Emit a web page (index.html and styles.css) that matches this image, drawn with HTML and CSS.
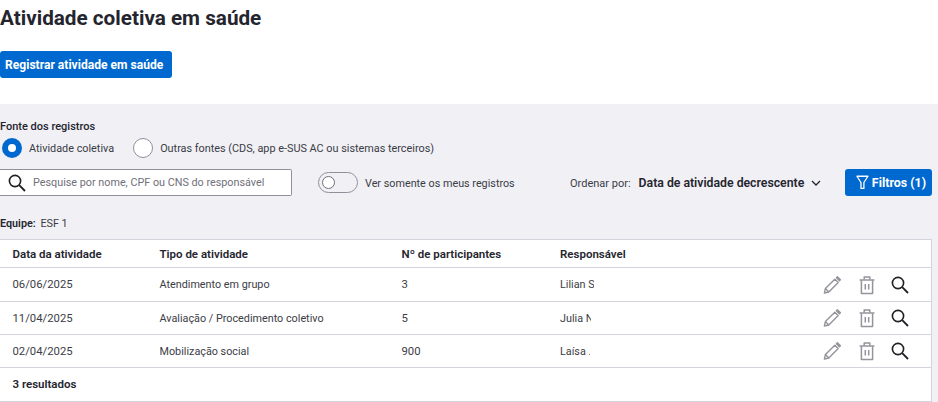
FILE: index.html
```html
<!DOCTYPE html>
<html lang="pt-BR">
<head>
<meta charset="utf-8">
<title>Atividade coletiva em saúde</title>
<link rel="stylesheet" href="styles.css">
</head>
<body>
<header class="head">
  <h1 class="title">Atividade coletiva em saúde</h1>
  <button class="btn btn-register">Registrar atividade em saúde</button>
</header>
<main class="panel">
  <div class="label-strong">Fonte dos registros</div>
  <div class="radios">
    <label class="radio"><span class="radio-dot on"></span>Atividade coletiva</label>
    <label class="radio"><span class="radio-dot"></span>Outras fontes (CDS, app e-SUS AC ou sistemas terceiros)</label>
  </div>
  <div class="toolbar">
    <div class="search">
      <svg class="search-icon" viewBox="0 0 20 20" width="20" height="20"><circle cx="8" cy="8" r="5.6" fill="none" stroke="#1f1f24" stroke-width="1.6"/><path d="M12.2 12.2 18 18" stroke="#1f1f24" stroke-width="1.8" fill="none"/></svg>
      <span class="placeholder">Pesquise por nome, CPF ou CNS do responsável</span>
    </div>
    <div class="switch-wrap">
      <span class="switch"><span class="knob"></span></span>
      <span class="nudge">Ver somente os meus registros</span>
    </div>
    <div class="sort">
      <span class="nudge">Ordenar por:</span>
      <strong class="sort-value nudge">Data de atividade decrescente</strong>
      <svg class="chev" viewBox="0 0 10 6" width="10" height="6"><path d="M1 1l4 4 4-4" fill="none" stroke="#24252e" stroke-width="1.3"/></svg>
    </div>
    <button class="btn btn-filter">
      <svg viewBox="0 0 14 16" width="13" height="15"><path d="M1 1.2h12L8.6 8v6.5H5.4V8z" fill="none" stroke="#fff" stroke-width="1.4" stroke-linejoin="round"/></svg>
      Filtros (1)
    </button>
  </div>
  <div class="team"><strong>Equipe:</strong> ESF 1</div>
  <section class="table">
    <div class="row row-head">
      <div class="c1">Data da atividade</div><div class="c2">Tipo de atividade</div><div class="c3">Nº de participantes</div><div class="c4">Responsável</div>
    </div>
    <div class="row row-a">
      <div class="c1 num">06/06/2025</div><div class="c2">Atendimento em grupo</div><div class="c3 num">3</div><div class="c4"><span class="name n1">Lilian S</span></div>
      <div class="actions">
        <svg class="ic" viewBox="0 0 20 20" width="20" height="20"><use href="#pen"/></svg>
        <svg class="ic" viewBox="-1 0 20 20" width="20" height="20"><use href="#bin"/></svg>
        <svg class="ic" viewBox="0 0 20 20" width="20" height="20"><use href="#mag"/></svg>
      </div>
    </div>
    <div class="row">
      <div class="c1 num">11/04/2025</div><div class="c2">Avaliação / Procedimento coletivo</div><div class="c3 num">5</div><div class="c4"><span class="name n2">Julia N</span></div>
      <div class="actions">
        <svg class="ic" viewBox="0 0 20 20" width="20" height="20"><use href="#pen"/></svg>
        <svg class="ic" viewBox="-1 0 20 20" width="20" height="20"><use href="#bin"/></svg>
        <svg class="ic" viewBox="0 0 20 20" width="20" height="20"><use href="#mag"/></svg>
      </div>
    </div>
    <div class="row">
      <div class="c1 num">02/04/2025</div><div class="c2">Mobilização social</div><div class="c3 num">900</div><div class="c4"><span class="name n3">Laísa .</span></div>
      <div class="actions">
        <svg class="ic" viewBox="0 0 20 20" width="20" height="20"><use href="#pen"/></svg>
        <svg class="ic" viewBox="-1 0 20 20" width="20" height="20"><use href="#bin"/></svg>
        <svg class="ic" viewBox="0 0 20 20" width="20" height="20"><use href="#mag"/></svg>
      </div>
    </div>
    <div class="row row-foot"><div class="c1 foot-text">3 resultados</div></div>
  </section>
</main>
<svg class="defs" width="0" height="0">
  <defs>
    <g id="pen" fill="none" stroke="#93949c" stroke-width="1.4" stroke-linejoin="round"><path d="M2.4 18l1-4.4L12.8 4.2l3.4 3.4L6.8 17z"/><path d="M3.4 13.6 6.8 17"/><path d="M15.4 1.8l3 3-1 1-3-3z"/></g>
    <g id="bin" fill="none" stroke="#93949c" stroke-width="1.5" stroke-linejoin="round"><path d="M2.6 5h14.8"/><path d="M7.2 4.6V2h5.6v2.6"/><path d="M4.4 5.2v13.2h11.2V5.2"/><path d="M8.3 9v5.6M11.7 9v5.6"/></g>
    <g id="mag" fill="none" stroke="#1f1f24"><circle cx="8" cy="8" r="5.6" stroke-width="1.6"/><path d="M12.2 12.2 18 18" stroke-width="1.8"/></g>
  </defs>
</svg>
</body>
</html>
```
FILE: styles.css
```css
* { box-sizing: border-box; }
html, body { margin: 0; height: 402px; overflow: hidden; background: #fff; }
body { font-family: Roboto, "Noto Sans", sans-serif; font-size: 10.8px; color: #24252e; }
.head { height: 104px; padding-top: 6px; }
.title { margin: 0; font-size: 20.7px; line-height: 24px; font-weight: 700; color: #24252e; }
.btn { border: 0; background: #0069d0; color: #fff; font-family: inherit; font-weight: 700; border-radius: 3px; display: flex; align-items: center; white-space: nowrap; }
.btn-register { margin-top: 21px; width: 172px; height: 27px; padding: 0 0 0 5px; font-size: 12.1px; }
.panel { height: 298px; background: #f0f0f5; padding-top: 15px; }
.label-strong { font-size: 11px; font-weight: 500; line-height: 15px; }
.radios { display: flex; gap: 17px; height: 22px; margin-top: 3px; }
.radio { display: flex; align-items: center; color: #3b3c45; font-size: 10.85px; }
.radio-dot { width: 20px; height: 20px; margin: 0 7px 0 2px; border-radius: 50%; border: 1px solid #8f9099; background: #fff; }
.radio-dot.on { border: 6px solid #0069d0; }
.toolbar { display: flex; align-items: center; height: 27px; margin-top: 10px; }
.search { width: 292px; height: 27px; display: flex; align-items: center; background: #fff; border: 1px solid #8f9099; border-left: 0; border-radius: 0 2px 2px 0; padding-left: 7px; }
.search-icon { flex: none; margin-right: 6px; }
.placeholder { color: #6f7079; white-space: nowrap; }
.switch-wrap { display: flex; align-items: center; gap: 7px; margin-left: 26px; width: 252px; color: #3b3c45; }
.switch { width: 40px; height: 21px; border: 1px solid #8f9099; border-radius: 11px; padding: 3px; display: block; background: #f0f0f5; }
.knob { display: block; width: 13px; height: 13px; border-radius: 50%; background: #fff; border: 1px solid #6f7079; }
.nudge { padding-top: 1px; }
.sort { display: flex; align-items: center; width: 275px; color: #3b3c45; font-size: 11px; }
.sort-value { margin-left: 8px; font-weight: 600; font-size: 12.25px; color: #24252e; white-space: nowrap; }
.chev { margin-left: 7px; }
.btn-filter { width: 87px; height: 27px; gap: 3px; padding-left: 11px; font-size: 12.4px; }
.team { margin-top: 21px; line-height: 14px; height: 22px; color: #3b3c45; }
.team strong { font-weight: 600; color: #24252e; margin-right: 2px; }
.table { width: 932px; height: 163px; background: #fff; border: 1px solid #d3d4dd; border-width: 1px 1px 1px 0; }
.row { display: flex; align-items: center; height: 33px; border-bottom: 1px solid #d3d4dd; color: #3b3c45; }
.row-head { height: 28px; font-size: 11.5px; font-weight: 600; color: #24252e; }
.row-a { height: 34px; }
.row-foot { height: 34px; border-bottom: 0; font-size: 11.5px; font-weight: 600; color: #24252e; }
.foot-text { padding-bottom: 2px; }
.c1 { width: 159.5px; padding-left: 12.5px; flex: none; }
.c2 { width: 242px; flex: none; white-space: nowrap; }
.c3 { width: 158.5px; flex: none; white-space: nowrap; }
.c4 { width: 100px; flex: none; white-space: nowrap; }
.num { font-size: 11.3px; }
.name { display: block; overflow: hidden; }
.n1 { width: 34px; }
.n2 { width: 31px; }
.n3 { width: 30px; }
.actions { margin-left: auto; margin-right: 21px; display: flex; gap: 14px; }
.ic { display: block; }
.defs { position: absolute; }
```
